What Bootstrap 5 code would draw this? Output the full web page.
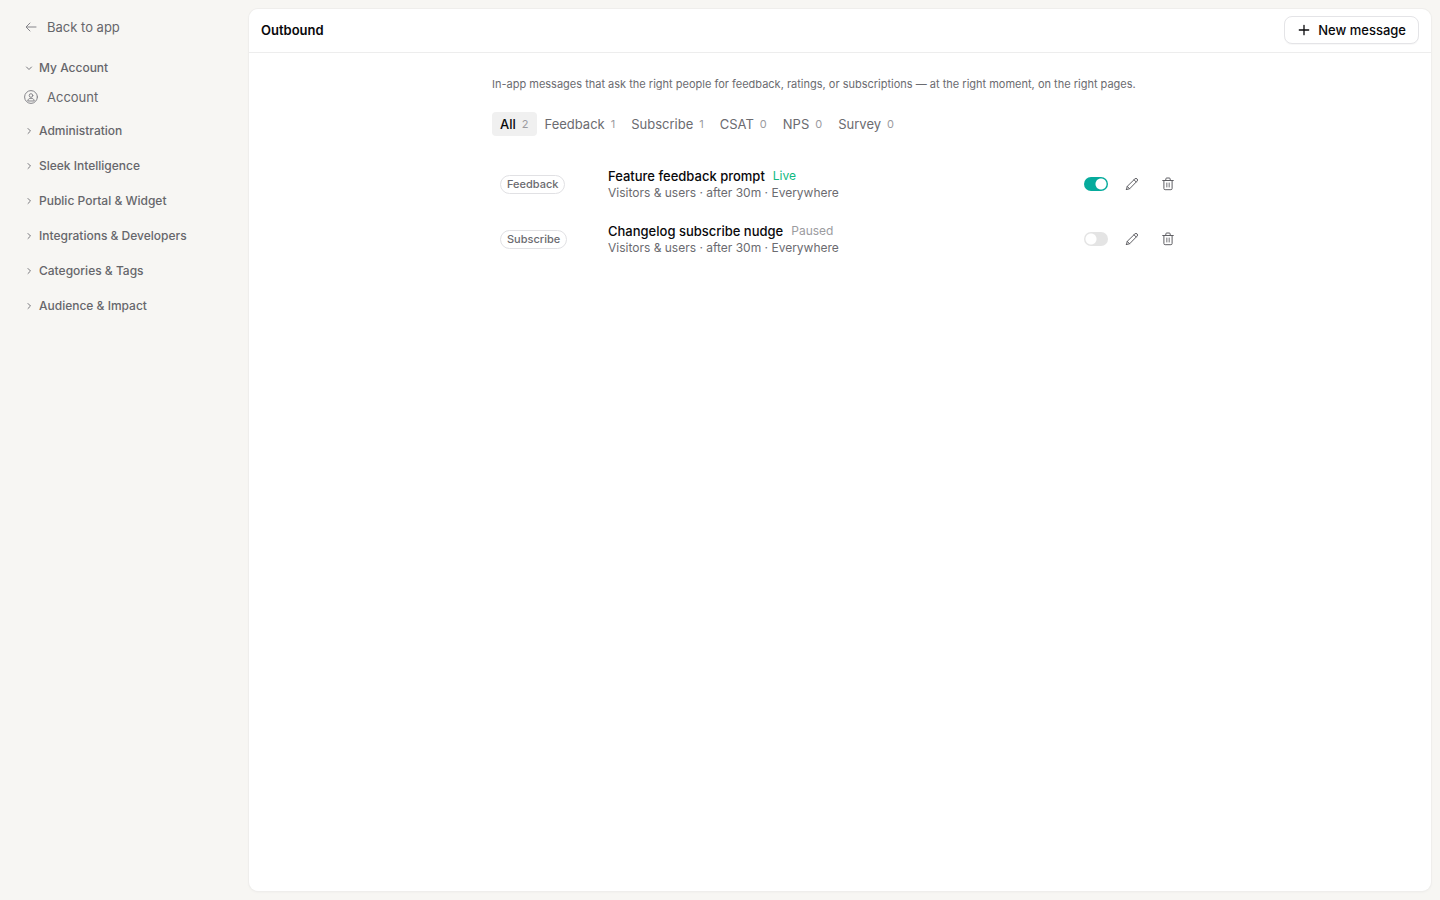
<!DOCTYPE html>
<html lang="en">
<head>
<meta charset="utf-8">
<meta name="viewport" content="width=device-width, initial-scale=1">
<title>Outbound</title>
<link href="https://cdn.jsdelivr.net/npm/bootstrap@5.3.0/dist/css/bootstrap.min.css" rel="stylesheet">
<style>
  body { font-family: Inter, "Liberation Sans", sans-serif; font-size: 13px; line-height: 20px; background: #f7f6f3; color: #09090b; }
  a, button { color: inherit; text-decoration: none; }
  svg { display: block; fill: none; stroke: currentColor; stroke-linecap: round; stroke-linejoin: round; flex-shrink: 0; }
  .sidebar { width: 248px; padding: 13px 8px 12px 16px; color: #66666b; }
  .side-link { height: 27px; gap: 9px; padding: 0 8px; font-size: 13px; }
  .side-link svg { color: #85858a; }
  .side-group { height: 28px; gap: 5px; padding: 0 8px; font-size: 12px; font-weight: 500; border: 0; background: none; width: 100%; }
  .side-group svg { color: #77777c; }
  .side-groups { gap: 7px; margin-top: 14px; }
  .side-section { gap: 1px; }
  .panel { margin: 9px 9px 9px 1px; background: #fff; border-radius: 9px; box-shadow: 0 0 0 1px #efeeec, 0 1px 3px #0000000d; }
  .panel-head { height: 44px; padding: 0 12px 1px; border-bottom: 1px solid #ededed; }
  .panel-head h1 { font-size: 13px; line-height: 20px; font-weight: 600; }
  .new-btn { height: 28px; padding: 0 12px; gap: 7px; font-size: 13px; font-weight: 500; background: #fff; border: 1px solid #e4e4e7; border-radius: 8px; box-shadow: 0 1px 1px #00000008; }
  .content { max-width: 696px; padding-top: 22px; }
  .intro { font-size: 11px; line-height: 18px; color: #6b6b70; }
  .tabs { margin-top: 19px; }
  .tab { height: 24px; padding: 0 8px; gap: 6px; border: 0; background: none; border-radius: 4px; color: #6b6b70; }
  .tab span { font-size: 11px; font-weight: 400; color: #9b9ba0; }
  .tab.active { background: #f0f0f0; color: #09090b; font-weight: 500; }
  .messages { margin-top: 20px; }
  .message { min-height: 55px; padding: 8px; gap: 12px; }
  .kind { width: 96px; }
  .pill { display: inline-block; padding: 0 6px; font-size: 11px; line-height: 17px; font-weight: 500; color: #6b6b70; border: 1px solid #e1e1e4; border-radius: 10px; }
  .title { font-size: 13px; line-height: 18px; font-weight: 500; }
  .state { font-size: 12px; line-height: 18px; color: #9b9ba0; }
  .state.live { color: #10b981; }
  .detail { font-size: 12px; line-height: 16px; color: #6b6b70; }
  .toggle { appearance: none; width: 24px; height: 14px; margin: 0; border-radius: 7px; background: #e4e4e4 radial-gradient(circle at 7px 7px, #fff 5px, transparent 6px); }
  .toggle:checked { background: #06ab9c radial-gradient(circle at 17px 7px, #fff 5px, transparent 6px); }
  .tool { width: 24px; height: 24px; padding: 0; border: 0; background: none; color: #5f5f64; }
</style>
</head>
<body>
<svg class="d-none" aria-hidden="true">
  <symbol id="chevron" viewBox="0 0 10 10"><path d="M4 2.5 6.5 5 4 7.5"/></symbol>
  <symbol id="pencil" viewBox="0 0 14 14"><path d="M1.5 12.5 2.2 9.4 9.9 1.9a1.5 1.5 0 0 1 2.2 2.2L4.6 11.8 1.5 12.5ZM9 2.8l2.2 2.2M2.2 9.4l2.4 2.4"/></symbol>
  <symbol id="trash" viewBox="0 0 14 14"><path d="M1.7 3.5h10.6M4.8 3.5V2q0-1 1-1h2.4q1 0 1 1v1.5M2.9 3.5v8q0 1.2 1.2 1.2h5.8q1.2 0 1.2-1.2v-8"/><path stroke-width=".6" d="M5.5 6v4M7 6v4M8.5 6v4"/></symbol>
</svg>
<div class="d-flex min-vh-100">
  <nav class="sidebar flex-shrink-0" aria-label="Settings">
    <a class="side-link d-flex align-items-center" href="#"><svg width="14" height="14" viewBox="0 0 14 14"><path d="M12 7H2.5M6 3 2 7l4 4"/></svg>Back to app</a>
    <div class="side-groups d-flex flex-column">
      <div class="side-section d-flex flex-column">
        <button class="side-group d-flex align-items-center" type="button" aria-expanded="true"><svg width="10" height="10" viewBox="0 0 10 10"><path d="M2.5 4 5 6.5 7.5 4"/></svg>My Account</button>
        <a class="side-link d-flex align-items-center" href="#"><svg width="14" height="14" viewBox="0 0 14 14"><circle cx="7" cy="7" r="6.4"/><circle cx="7" cy="5.5" r="1.8"/><path d="M3.8 10.6c.2-1.6 1.4-2.3 3.2-2.3s3 .7 3.2 2.3Z"/></svg>Account</a>
      </div>
      <button class="side-group d-flex align-items-center" type="button"><svg width="10" height="10"><use href="#chevron"/></svg>Administration</button>
      <button class="side-group d-flex align-items-center" type="button"><svg width="10" height="10"><use href="#chevron"/></svg>Sleek Intelligence</button>
      <button class="side-group d-flex align-items-center" type="button"><svg width="10" height="10"><use href="#chevron"/></svg>Public Portal &amp; Widget</button>
      <button class="side-group d-flex align-items-center" type="button"><svg width="10" height="10"><use href="#chevron"/></svg>Integrations &amp; Developers</button>
      <button class="side-group d-flex align-items-center" type="button"><svg width="10" height="10"><use href="#chevron"/></svg>Categories &amp; Tags</button>
      <button class="side-group d-flex align-items-center" type="button"><svg width="10" height="10"><use href="#chevron"/></svg>Audience &amp; Impact</button>
    </div>
  </nav>
  <main class="panel flex-grow-1">
    <header class="panel-head d-flex align-items-center justify-content-between">
      <h1 class="m-0">Outbound</h1>
      <button class="new-btn d-flex align-items-center" type="button"><svg width="14" height="14" viewBox="0 0 14 14" stroke-width="1.3"><path d="M7 2.3v9.4M2.3 7h9.4"/></svg>New message</button>
    </header>
    <div class="content mx-auto">
      <p class="intro mb-0">In-app messages that ask the right people for feedback, ratings, or subscriptions — at the right moment, on the right pages.</p>
      <div class="tabs d-flex flex-wrap">
        <button class="tab active d-flex align-items-center" type="button">All <span>2</span></button>
        <button class="tab d-flex align-items-center" type="button">Feedback <span>1</span></button>
        <button class="tab d-flex align-items-center" type="button">Subscribe <span>1</span></button>
        <button class="tab d-flex align-items-center" type="button">CSAT <span>0</span></button>
        <button class="tab d-flex align-items-center" type="button">NPS <span>0</span></button>
        <button class="tab d-flex align-items-center" type="button">Survey <span>0</span></button>
      </div>
      <div class="messages">
        <div class="message d-flex align-items-center">
          <div class="kind"><span class="pill">Feedback</span></div>
          <div class="flex-grow-1">
            <div class="d-flex gap-2"><span class="title">Feature feedback prompt</span><span class="state live">Live</span></div>
            <div class="detail">Visitors &amp; users · after 30m · Everywhere</div>
          </div>
          <input class="toggle" type="checkbox" role="switch" aria-label="Feature feedback prompt enabled" checked>
          <button class="tool d-flex align-items-center justify-content-center" type="button" aria-label="Edit"><svg width="14" height="14"><use href="#pencil"/></svg></button>
          <button class="tool d-flex align-items-center justify-content-center" type="button" aria-label="Delete"><svg width="14" height="14"><use href="#trash"/></svg></button>
        </div>
        <div class="message d-flex align-items-center">
          <div class="kind"><span class="pill">Subscribe</span></div>
          <div class="flex-grow-1">
            <div class="d-flex gap-2"><span class="title">Changelog subscribe nudge</span><span class="state">Paused</span></div>
            <div class="detail">Visitors &amp; users · after 30m · Everywhere</div>
          </div>
          <input class="toggle" type="checkbox" role="switch" aria-label="Changelog subscribe nudge enabled">
          <button class="tool d-flex align-items-center justify-content-center" type="button" aria-label="Edit"><svg width="14" height="14"><use href="#pencil"/></svg></button>
          <button class="tool d-flex align-items-center justify-content-center" type="button" aria-label="Delete"><svg width="14" height="14"><use href="#trash"/></svg></button>
        </div>
      </div>
    </div>
  </main>
</div>
<script src="https://cdn.jsdelivr.net/npm/bootstrap@5.3.0/dist/js/bootstrap.bundle.min.js"></script>
</body>
</html>
